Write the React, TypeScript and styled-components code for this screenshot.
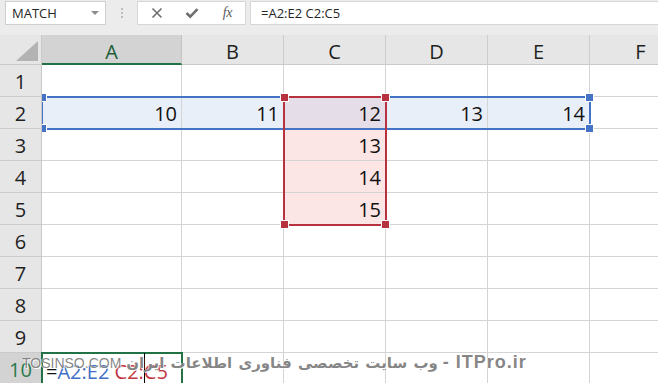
import styled, { createGlobalStyle } from "styled-components";

const GlobalStyle = createGlobalStyle`
  html, body {
    margin: 0;
    padding: 0;
    width: 658px;
    height: 383px;
    overflow: hidden;
    background: #ffffff;
  }
  body {
    font-family: "Open Sans", "Noto Sans", sans-serif;
  }
`;

const HEAD_W = 42;
const HEAD_H = 30;
const ROW_H = 32;

const columns = [
  { name: "A", width: 140 },
  { name: "B", width: 102 },
  { name: "C", width: 102 },
  { name: "D", width: 102 },
  { name: "E", width: 102 },
  { name: "F", width: 102 },
];

const values: Record<string, number> = {
  A2: 10,
  B2: 11,
  C2: 12,
  D2: 13,
  E2: 14,
  C3: 13,
  C4: 14,
  C5: 15,
};

const rows = [1, 2, 3, 4, 5, 6, 7, 8, 9, 10];

const fillFor = (col: string, row: number) => {
  if (col === "C" && row === 2) return "#e5dde7";
  if (row === 2 && col !== "F") return "#e9eff9";
  if (col === "C" && row >= 3 && row <= 5) return "#fbe5e5";
  return "#ffffff";
};

const colLeft = (i: number) =>
  columns.slice(0, i).reduce((sum, c) => sum + c.width, 0);

// frame sits centred on the grid lines around the range
const rangeBox = (c1: number, c2: number, r1: number, r2: number) => ({
  left: colLeft(c1) - 1,
  top: (r1 - 1) * ROW_H - 1,
  width: colLeft(c2 + 1) - colLeft(c1) + 2,
  height: (r2 - r1 + 1) * ROW_H + 2,
});

const TopBar = styled.div`
  height: 35px;
  background: #ececec;
  display: flex;
  align-items: flex-start;
  padding: 1px 0 0 5px;
  box-sizing: border-box;
`;

const NameBox = styled.div`
  width: 101px;
  height: 24px;
  background: #fff;
  border: 1px solid #cfcfcf;
  box-sizing: border-box;
  display: flex;
  align-items: center;
  justify-content: space-between;
  padding: 0 6px 0 6px;
  font-size: 13px;
  color: #262626;
`;

const Caret = styled.span`
  width: 0;
  height: 0;
  border-left: 4px solid transparent;
  border-right: 4px solid transparent;
  border-top: 4px solid #8c8c8c;
`;

const Grip = styled.div`
  width: 31px;
  height: 24px;
  display: flex;
  flex-direction: column;
  align-items: center;
  justify-content: center;
  gap: 2px;
`;

const GripDot = styled.span`
  width: 2px;
  height: 2px;
  background: #bdbdbd;
`;

const ButtonBox = styled.div`
  width: 109px;
  height: 24px;
  background: #fff;
  border: 1px solid #d6d6d6;
  box-sizing: border-box;
  display: flex;
  padding-left: 1px;
`;

const BarButton = styled.div`
  width: 36px;
  height: 22px;
  display: flex;
  align-items: center;
  justify-content: center;
  color: #6f6f6f;
`;

const Fx = styled.span`
  font-family: "Liberation Serif", serif;
  font-style: italic;
  font-size: 14px;
  color: #5a5a5a;
  letter-spacing: -0.5px;
`;

const FormulaInput = styled.div`
  flex: 1;
  margin-left: 4px;
  height: 24px;
  background: #fff;
  border: 1px solid #d6d6d6;
  border-right: none;
  box-sizing: border-box;
  display: flex;
  align-items: center;
  padding-left: 10px;
  font-size: 13px;
  color: #262626;
`;

const Sheet = styled.div`
  position: relative;
  overflow: hidden;
`;

const Grid = styled.div`
  display: grid;
  grid-template-columns: ${HEAD_W}px ${columns.map((c) => `${c.width}px`).join(" ")};
  grid-template-rows: ${HEAD_H}px;
  grid-auto-rows: ${ROW_H}px;
`;

const Corner = styled.div`
  background: #e6e6e6;
  border-right: 1px solid #c9c9c9;
  border-bottom: 1px solid #c9c9c9;
  box-sizing: border-box;
  display: flex;
  align-items: flex-end;
  justify-content: flex-end;
  padding: 0 3px 3px 0;
`;

const CornerTriangle = styled.span`
  width: 0;
  height: 0;
  border-left: 22px solid transparent;
  border-bottom: 20px solid #b3b3b3;
`;

const ColHeader = styled.div<{ $active?: boolean }>`
  background: ${(p) => (p.$active ? "#d3d3d3" : "#e6e6e6")};
  border-right: 1px solid ${(p) => (p.$active ? "#c4c4c4" : "#cdcdcd")};
  border-bottom: ${(p) => (p.$active ? "2px solid #217346" : "1px solid #c9c9c9")};
  box-sizing: border-box;
  text-align: center;
  font-size: 20px;
  line-height: 30px;
  padding-top: 2px;
  color: ${(p) => (p.$active ? "#1d5c38" : "#1f1f1f")};
  overflow: hidden;
`;

const RowHeader = styled.div<{ $active?: boolean }>`
  background: ${(p) => (p.$active ? "#d3d3d3" : "#e6e6e6")};
  border-right: 1px solid #c9c9c9;
  border-bottom: 1px solid #cbcbcb;
  box-sizing: border-box;
  text-align: center;
  font-size: 20px;
  line-height: 30px;
  padding-top: 2px;
  color: ${(p) => (p.$active ? "#2a7a4c" : "#1f1f1f")};
  position: relative;
  z-index: 3;
`;

const Cell = styled.div<{ $fill: string }>`
  background: ${(p) => p.$fill};
  border-right: 1px solid #d4d4d4;
  border-bottom: 1px solid #d4d4d4;
  box-sizing: border-box;
  text-align: right;
  padding: 2px 4px 0 0;
  font-size: 20px;
  line-height: 30px;
  color: #111;
`;

const EditCell = styled.div`
  background: #fff;
  outline: 2px solid #217346;
  outline-offset: -1px;
  box-sizing: border-box;
  padding: 2px 0 0 4px;
  font-size: 20px;
  line-height: 30px;
  color: #111;
  white-space: nowrap;
  position: relative;
  z-index: 4;
`;

const Ref = styled.span<{ $color: string }>`
  color: ${(p) => p.$color};
`;

const TextCursor = styled.span`
  display: inline-block;
  width: 1px;
  height: 30px;
  margin: 0 -1px -6px 0;
  background: #000;
  position: relative;
  top: -2px;
`;

const RangeLayer = styled.div`
  position: absolute;
  left: ${HEAD_W - 4}px;
  top: ${HEAD_H}px;
  right: 0;
  bottom: 0;
  pointer-events: none;
  z-index: 2;
`;

const RangeFrame = styled.div<{ $color: string }>`
  position: absolute;
  margin-left: 4px;
  border: 2px solid ${(p) => p.$color};
  box-sizing: border-box;
`;

const Handle = styled.span<{ $color: string; $x: "left" | "right"; $y: "top" | "bottom" }>`
  position: absolute;
  width: 7px;
  height: 7px;
  background: ${(p) => p.$color};
  border: 1px solid #fff;
  box-sizing: content-box;
  ${(p) => p.$x}: -5px;
  ${(p) => p.$y}: -5px;
`;

const Watermark = styled.div`
  position: absolute;
  left: 22px;
  top: 317px;
  display: flex;
  align-items: baseline;
  gap: 5px;
  color: rgba(112, 112, 112, 0.85);
  text-shadow: 1px 1px 0 rgba(255, 255, 255, 0.9), -1px 0 0 rgba(255, 255, 255, 0.6);
  pointer-events: none;
  white-space: nowrap;
  z-index: 5;
`;

const Brand = styled.span`
  font-family: "Liberation Sans", sans-serif;
  font-size: 14px;
`;

const Persian = styled.span`
  font-family: "DejaVu Sans", "Noto Sans", sans-serif;
  font-size: 15px;
  font-weight: bold;
  word-spacing: 1px;
`;

const Site = styled.span`
  font-family: "Liberation Sans", sans-serif;
  font-size: 18px;
  font-weight: bold;
  letter-spacing: 1px;
`;

type Frame = { c1: number; c2: number; r1: number; r2: number; color: string };

const frames: Frame[] = [
  { c1: 0, c2: 4, r1: 2, r2: 2, color: "#4472c4" },
  { c1: 2, c2: 2, r1: 2, r2: 5, color: "#b7323f" },
];

function CloseIcon() {
  return (
    <svg width="12" height="12" viewBox="0 0 12 12">
      <path d="M1.5 1.5 L10.5 10.5 M10.5 1.5 L1.5 10.5" stroke="#6f6f6f" strokeWidth="1.6" fill="none" />
    </svg>
  );
}

function CheckIcon() {
  return (
    <svg width="14" height="12" viewBox="0 0 14 12">
      <path d="M1.5 6 L5.2 9.6 L12.5 2.2" stroke="#6f6f6f" strokeWidth="2.6" fill="none" />
    </svg>
  );
}

export default function App() {
  return (
    <>
      <GlobalStyle />
      <TopBar>
        <NameBox>
          MATCH
          <Caret />
        </NameBox>
        <Grip>
          <GripDot />
          <GripDot />
          <GripDot />
        </Grip>
        <ButtonBox>
          <BarButton>
            <CloseIcon />
          </BarButton>
          <BarButton>
            <CheckIcon />
          </BarButton>
          <BarButton>
            <Fx>fx</Fx>
          </BarButton>
        </ButtonBox>
        <FormulaInput>=A2:E2 C2:C5</FormulaInput>
      </TopBar>
      <Sheet>
        <Grid>
          <Corner>
            <CornerTriangle />
          </Corner>
          {columns.map((c) => (
            <ColHeader key={c.name} $active={c.name === "A"}>
              {c.name}
            </ColHeader>
          ))}
          {rows.map((r) => [
            <RowHeader key={`h${r}`} $active={r === 10}>
              {r}
            </RowHeader>,
            ...columns.map((c) =>
              r === 10 && c.name === "A" ? (
                <EditCell key="A10">
                  =<Ref $color="#3f6fc6">A2:E2</Ref> <Ref $color="#c2363f">C2:</Ref>
                  <TextCursor />
                  <Ref $color="#c2363f">C5</Ref>
                </EditCell>
              ) : (
                <Cell key={`${c.name}${r}`} $fill={fillFor(c.name, r)}>
                  {values[`${c.name}${r}`]}
                </Cell>
              )
            ),
          ])}
        </Grid>
        <RangeLayer>
          {frames.map((f, i) => (
            <RangeFrame key={i} $color={f.color} style={rangeBox(f.c1, f.c2, f.r1, f.r2)}>
              <Handle $color={f.color} $x="left" $y="top" />
              <Handle $color={f.color} $x="right" $y="top" />
              <Handle $color={f.color} $x="left" $y="bottom" />
              <Handle $color={f.color} $x="right" $y="bottom" />
            </RangeFrame>
          ))}
        </RangeLayer>
        <Watermark>
          <Brand>TOSINSO.COM</Brand>
          <Persian>وب سایت تخصصی فناوری اطلاعات ایران</Persian>
          <Site>- ITPro.ir</Site>
        </Watermark>
      </Sheet>
    </>
  );
}
